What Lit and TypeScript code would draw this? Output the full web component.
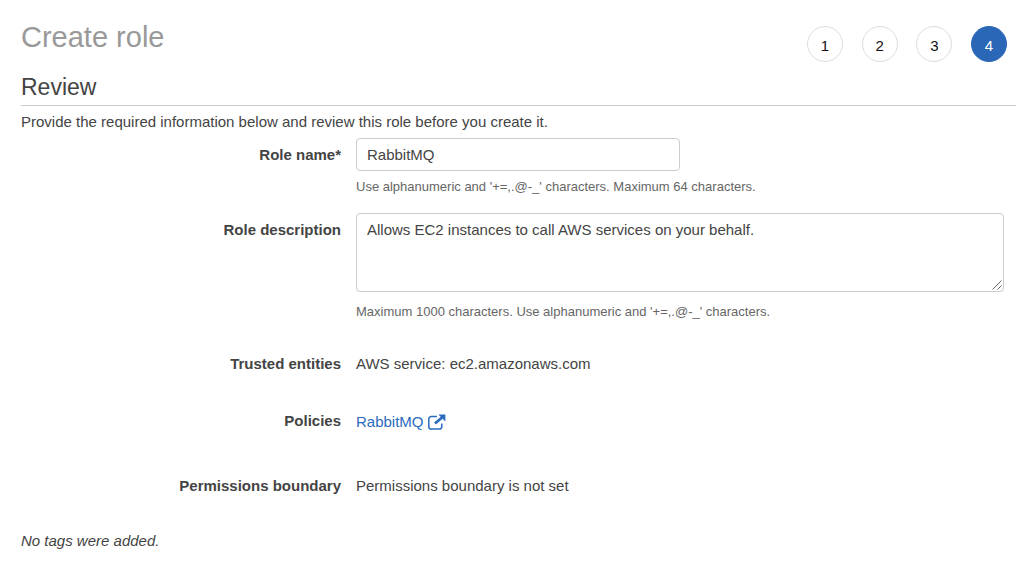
import { LitElement, html, css } from "lit";
import { customElement, property, state } from "lit/decorators.js";
import { classMap } from "lit/directives/class-map.js";

@customElement("step-indicator")
class StepIndicator extends LitElement {
  @property({ type: Number }) count = 4;
  @property({ type: Number }) current = 1;

  static styles = css`
    :host {
      display: block;
    }
    .steps {
      display: flex;
      justify-content: space-between;
      width: 200px;
      margin: 0;
      padding: 0;
      list-style: none;
    }
    .step {
      box-sizing: border-box;
      width: 36px;
      height: 36px;
      padding-top: 1px;
      border: 1px solid #ddd;
      border-radius: 50%;
      font-size: 15px;
      line-height: 35px;
      text-align: center;
      color: #111;
    }
    .active {
      border-color: #2a67b7;
      background: #2a67b7;
      color: #fff;
    }
  `;

  render() {
    const numbers = Array.from({ length: this.count }, (_, i) => i + 1);
    return html`<ol class="steps">
      ${numbers.map(
        (n) => html`<li
          class=${classMap({ step: true, active: n === this.current })}
          aria-current=${n === this.current ? "step" : "false"}
        >${n}</li>`
      )}
    </ol>`;
  }
}

@customElement("app-root")
class AppRoot extends LitElement {
  @state() private roleName = "RabbitMQ";
  @state() private description =
    "Allows EC2 instances to call AWS services on your behalf.";

  static styles = css`
    :host {
      display: block;
      padding: 20px 8px 20px 21px;
      background: #fff;
      color: #444;
      font-family: "Liberation Sans", Arial, Helvetica, sans-serif;
      font-size: 15px;
      line-height: 20px;
    }
    .top {
      display: flex;
      justify-content: space-between;
      align-items: flex-start;
      padding-right: 9px;
    }
    .indicator {
      padding-top: 6px;
    }
    .title {
      margin: 0;
      font-size: 29px;
      line-height: 34px;
      font-weight: 400;
      color: #999;
    }
    .heading {
      margin: 11px 0 0;
      padding-bottom: 4px;
      border-bottom: 1px solid #ccc;
      font-size: 23px;
      line-height: 28px;
      font-weight: 400;
    }
    .intro {
      margin: 6px 0;
    }
    .form {
      display: grid;
      grid-template-columns: 320px minmax(0, 1fr);
      column-gap: 15px;
      padding-right: 12px;
    }
    .label {
      padding-top: 7px;
      text-align: right;
      font-weight: 700;
    }
    .text-label {
      text-align: right;
      font-weight: 700;
    }
    .field {
      margin-bottom: 16px;
    }
    .area-field {
      margin-bottom: 32px;
    }
    .input,
    .textarea {
      display: block;
      box-sizing: border-box;
      margin: 0;
      padding: 6px 10px;
      border: 1px solid #ccc;
      border-radius: 4px;
      background: #fff;
      color: #444;
      font: inherit;
      outline: none;
    }
    .input {
      width: 50%;
      height: 33px;
      padding: 5px 10px;
    }
    .textarea {
      width: 100%;
      height: 79px;
      resize: both;
    }
    .textarea::-webkit-resizer {
      background: url("data:image/svg+xml,%3Csvg xmlns='http://www.w3.org/2000/svg' width='15' height='15'%3E%3Cpath d='M4.5 13.5L13.5 4.5M9.5 13.5L13.5 9.5' stroke='%23666' fill='none'/%3E%3C/svg%3E")
        no-repeat right bottom;
    }
    .help {
      margin: 6px 0 0;
      font-size: 13px;
      color: #666;
    }
    .area-field .help {
      margin-top: 10px;
    }
    .value {
      margin-bottom: 37px;
    }
    .link-value {
      margin-bottom: 44px;
      padding-top: 1px;
    }
    .last-value {
      margin-bottom: 35px;
    }
    .link {
      display: inline-flex;
      align-items: center;
      gap: 4px;
      color: #2a6bc0;
      text-decoration: none;
    }
    .icon {
      width: 18px;
      height: 16px;
    }
    .tags {
      margin: 0;
      font-style: italic;
    }
  `;

  render() {
    return html`
      <header class="top">
        <h1 class="title">Create role</h1>
        <step-indicator class="indicator" .count=${4} .current=${4}></step-indicator>
      </header>
      <main>
        <h2 class="heading">Review</h2>
        <p class="intro">Provide the required information below and review this role before you create it.</p>
        <form class="form" @submit=${(e: Event) => e.preventDefault()}>
          <label class="label" for="role-name">Role name*</label>
          <div class="field">
            <input
              id="role-name"
              class="input"
              type="text"
              maxlength="64"
              required
              aria-describedby="name-help"
              .value=${this.roleName}
              @input=${(e: Event) => (this.roleName = (e.target as HTMLInputElement).value)}
            />
            <p class="help" id="name-help">Use alphanumeric and '+=,.@-_' characters. Maximum 64 characters.</p>
          </div>
          <label class="label" for="role-description">Role description</label>
          <div class="area-field">
            <textarea
              id="role-description"
              class="textarea"
              maxlength="1000"
              aria-describedby="description-help"
              .value=${this.description}
              @input=${(e: Event) => (this.description = (e.target as HTMLTextAreaElement).value)}
            ></textarea>
            <p class="help" id="description-help">Maximum 1000 characters. Use alphanumeric and '+=,.@-_' characters.</p>
          </div>
          <div class="text-label">Trusted entities</div>
          <div class="value">AWS service: ec2.amazonaws.com</div>
          <div class="text-label">Policies</div>
          <div class="link-value">
            <a class="link" href="#policy">RabbitMQ
              <svg class="icon" viewBox="0 0 18 16" fill="none" aria-hidden="true">
                <path d="M9 2.4H3.4a2.6 2.6 0 0 0-2.6 2.6v7.4a2.6 2.6 0 0 0 2.6 2.6h7.8a2.6 2.6 0 0 0 2.6-2.6V9.6" stroke="currentColor" stroke-width="1.5" />
                <path d="M7 9.6L14.6 3" stroke="currentColor" stroke-width="2.7" />
                <path d="M10.4 .4h7v7z" fill="currentColor" />
              </svg></a>
          </div>
          <div class="text-label">Permissions boundary</div>
          <div class="last-value">Permissions boundary is not set</div>
        </form>
        <p class="tags">No tags were added.</p>
      </main>
    `;
  }
}
